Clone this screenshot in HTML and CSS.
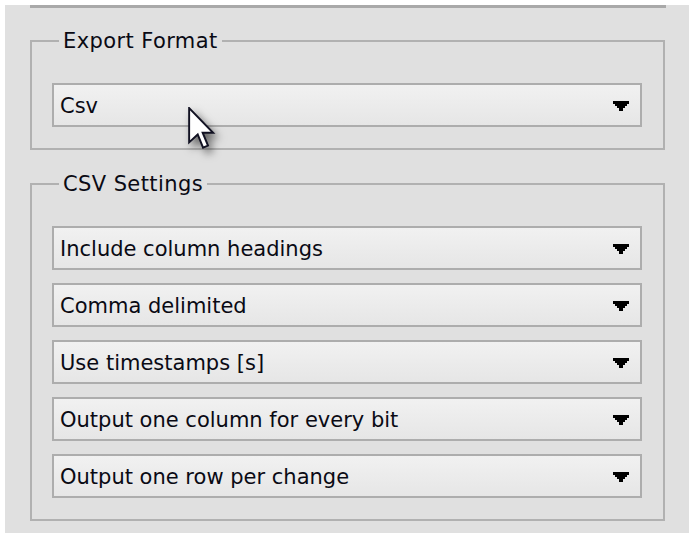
FILE: index.html
```html
<!DOCTYPE html>
<html>
<head>
<meta charset="utf-8">
<link rel="stylesheet" href="styles.css">
</head>
<body>
<div class="panel">
  <div class="topline"></div>
  <fieldset class="group group-format">
    <legend>Export Format</legend>
    <div class="combo"><span>Csv</span><svg class="arrow" width="16" height="10" viewBox="0 0 16 10"><path d="M0 0H16V3H14V5H12V7H10V10H6V7H4V5H2V3H0Z"/></svg></div>
  </fieldset>
  <fieldset class="group group-csv">
    <legend>CSV Settings</legend>
    <div class="combo"><span>Include column headings</span><svg class="arrow" width="16" height="10" viewBox="0 0 16 10"><path d="M0 0H16V3H14V5H12V7H10V10H6V7H4V5H2V3H0Z"/></svg></div>
    <div class="combo"><span>Comma delimited</span><svg class="arrow" width="16" height="10" viewBox="0 0 16 10"><path d="M0 0H16V3H14V5H12V7H10V10H6V7H4V5H2V3H0Z"/></svg></div>
    <div class="combo"><span>Use timestamps [s]</span><svg class="arrow" width="16" height="10" viewBox="0 0 16 10"><path d="M0 0H16V3H14V5H12V7H10V10H6V7H4V5H2V3H0Z"/></svg></div>
    <div class="combo"><span>Output one column for every bit</span><svg class="arrow" width="16" height="10" viewBox="0 0 16 10"><path d="M0 0H16V3H14V5H12V7H10V10H6V7H4V5H2V3H0Z"/></svg></div>
    <div class="combo"><span>Output one row per change</span><svg class="arrow" width="16" height="10" viewBox="0 0 16 10"><path d="M0 0H16V3H14V5H12V7H10V10H6V7H4V5H2V3H0Z"/></svg></div>
  </fieldset>
</div>
<svg class="cursor" width="28" height="45" viewBox="0 0 13 21">
  <path d="M0.5 0.5V16.5L4.5 12.8L7 19L9.3 18L6.8 12H11.7Z" fill="#ffffff" stroke="#111122" stroke-width="0.9" stroke-linejoin="miter"/>
</svg>
</body>
</html>
```

FILE: styles.css
```css
html, body {
  margin: 0;
  padding: 0;
  background: #ffffff;
}
body {
  position: relative;
  width: 694px;
  height: 536px;
  overflow: hidden;
  font-family: "DejaVu Sans", sans-serif;
  font-size: 21px;
  color: #0a0a14;
}
.panel {
  margin: 5px 0 0 5px;
  width: 684px;
  height: 528px;
  box-sizing: border-box;
  background: #e0e0e0;
  padding: 0 24px 0 25px;
  display: flex;
  flex-direction: column;
}
.topline {
  height: 3px;
  background: #a9a9a9;
  margin-right: -1px;
}
.group {
  margin: 0;
  border: 2px solid #b1b1b1;
  padding: 30px 21px 21px 20px;
  display: flex;
  flex-direction: column;
  gap: 13px;
  min-width: 0;
}
.group legend {
  margin-left: 7px;
  padding: 0 4px 0 4px;
  height: 24px;
  line-height: 24px;
  letter-spacing: 0.4px;
}
.group-format {
  margin-top: 21px;
}
.group-csv {
  margin-top: 22px;
}
.combo {
  height: 44px;
  box-sizing: border-box;
  border: 2px solid #adadad;
  background: linear-gradient(#f1f1f1, #e6e6e6);
  display: flex;
  align-items: center;
  justify-content: space-between;
  padding: 2px 11px 0 6px;
}
.combo span {
  white-space: nowrap;
}
.arrow {
  fill: #000000;
}
.cursor {
  position: absolute;
  left: 188px;
  top: 107px;
  filter: drop-shadow(4px 5px 4px rgba(0, 0, 0, 0.55));
}
```
